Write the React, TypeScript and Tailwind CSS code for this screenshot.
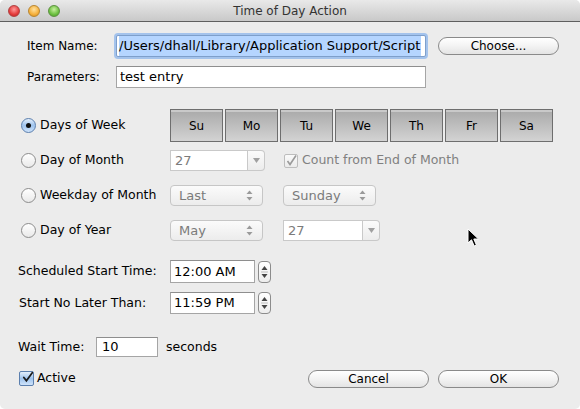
import React from "react";

const font = "font-['Lucida_Grande','DejaVu_Sans',sans-serif]";

const Radio: React.FC<{ on?: boolean }> = ({ on }) => (
  <span
    className={
      "flex h-[15px] w-[15px] items-center justify-center rounded-full border " +
      (on
        ? "border-[#5b7fae] bg-gradient-to-b from-[#e4effb] via-[#9fc4ee] to-[#cfe3fa]"
        : "border-[#8c8c8c] bg-gradient-to-b from-[#ffffff] to-[#e9e9e9]")
    }
  >
    {on && <span className="h-[5px] w-[5px] rounded-full bg-[#111]" />}
  </span>
);

const UpDown: React.FC<{ color?: string }> = ({ color = "#8c8c8c" }) => (
  <svg width="7" height="11" viewBox="0 0 7 11">
    <path d="M3.5 0.5 L6.5 4 L0.5 4 Z" fill={color} />
    <path d="M3.5 10.5 L6.5 7 L0.5 7 Z" fill={color} />
  </svg>
);

const Popup: React.FC<{ value: string; w: string }> = ({ value, w }) => (
  <div
    className={`${w} flex h-[21px] items-center justify-between rounded-[4px] border border-[#c6c6c6] bg-gradient-to-b from-[#fbfbfb] to-[#ececec] pl-[8px] pr-[9px] text-[13px] text-[#7b7b7b]`}
  >
    <span>{value}</span>
    <UpDown color="#9a9a9a" />
  </div>
);

const Combo: React.FC<{ value: string; w: string; h: string }> = ({ value, w, h }) => (
  <div className={`${w} ${h} flex`}>
    <div className="flex flex-1 items-center border border-[#c9c9c9] bg-white pl-[4px] text-[13px] text-[#7b7b7b]">
      {value}
    </div>
    <div className="flex w-[17px] items-center justify-center rounded-r-[4px] border border-l-0 border-[#c9c9c9] bg-gradient-to-b from-[#fbfbfb] to-[#ececec]">
      <svg width="7" height="5" viewBox="0 0 7 5">
        <path d="M0 0 L7 0 L3.5 5 Z" fill="#a0a0a0" />
      </svg>
    </div>
  </div>
);

const Pill: React.FC<{ label: string }> = ({ label }) => (
  <button className="flex h-[18px] w-[121px] items-center justify-center rounded-full border border-[#8a8a8a] bg-gradient-to-b from-[#ffffff] via-[#f3f3f3] to-[#e4e4e4] text-[12px] text-black">
    {label}
  </button>
);

const Stepper: React.FC = () => (
  <div className="ml-[3px] flex h-[22px] w-[13px] flex-col items-center justify-center rounded-[4px] border border-[#8c8c8c] bg-gradient-to-b from-[#ffffff] to-[#ededed]">
    <svg width="7" height="14" viewBox="0 0 7 14">
      <path d="M3.5 1 L6.5 5 L0.5 5 Z" fill="#444" />
      <path d="M0 7 L7 7" stroke="#bdbdbd" strokeWidth="1" />
      <path d="M3.5 13 L6.5 9 L0.5 9 Z" fill="#444" />
    </svg>
  </div>
);

const days = ["Su", "Mo", "Tu", "We", "Th", "Fr", "Sa"];

export default function App() {
  return (
    <div className={`${font} h-[409px] w-[580px] bg-white text-[12.5px] text-black`}>
      <div className="relative flex h-full flex-col overflow-hidden rounded-[5px] bg-[#ececec]">
        {/* title bar */}
        <div className="relative flex h-[22px] items-center justify-center border-b border-[#5f5f5f] bg-gradient-to-b from-[#e9e9e9] to-[#c9c9c9]">
          <div className="absolute left-[8px] top-[5px] flex gap-[8px]">
            <span className="h-[12px] w-[12px] rounded-full border border-[#b04040] bg-[radial-gradient(circle_at_50%_35%,#ff9a9a,#e43c3c_60%,#b82020)]" />
            <span className="h-[12px] w-[12px] rounded-full border border-[#b88530] bg-[radial-gradient(circle_at_50%_35%,#ffe2a0,#f5b03c_60%,#d08a1a)]" />
            <span className="h-[12px] w-[12px] rounded-full border border-[#5c9040] bg-[radial-gradient(circle_at_50%_35%,#c8f0a0,#6cc040_60%,#4a9a2a)]" />
          </div>
          <span className="text-[12px] text-[#333]">Time of Day Action</span>
        </div>

        {/* item name */}
        <div className="mt-[13px] flex h-[22px] items-center pl-[27px]">
          <span className="w-[89px] text-[12px]">Item Name:</span>
          <div className="flex h-[22px] w-[310px] items-center overflow-hidden whitespace-nowrap rounded-[2px] border border-[#7e9fcb] bg-white pl-[2px] text-[13px] shadow-[0_0_0_2px_#a4c3ec]">
            <span className="bg-[#b5d5ff] pr-[1px]">/Users/dhall/Library/Application Support/Script</span>
          </div>
          <div className="ml-[12px]">
            <Pill label="Choose..." />
          </div>
        </div>

        {/* parameters */}
        <div className="mt-[9px] flex h-[22px] items-center pl-[27px]">
          <span className="w-[89px] text-[12px]">Parameters:</span>
          <div className="flex h-[22px] w-[310px] items-center border border-[#a5a5a5] border-t-[#8e8e8e] bg-white pl-[3px] text-[13px]">
            test entry
          </div>
        </div>

        {/* schedule type */}
        <div className="mt-[20px] flex flex-col pl-[21px]">
          <div className="flex h-[35px] items-center">
            <Radio on />
            <span className="ml-[4px] w-[130px]">Days of Week</span>
            <div className="flex gap-[2px] text-[12px]">
              {days.map((d) => (
                <div
                  key={d}
                  className="flex h-[33px] w-[53px] items-center justify-center border border-[#6e6e6e] bg-gradient-to-b from-[#a9a9a9] to-[#d3d3d3] shadow-[inset_0_2px_0_#c9c9c9]"
                >
                  {d}
                </div>
              ))}
            </div>
          </div>
          <div className="flex h-[35px] items-center">
            <Radio />
            <span className="ml-[4px] w-[130px]">Day of Month</span>
            <Combo value="27" w="w-[95px]" h="h-[21px]" />
            <span className="ml-[19px] flex h-[14px] w-[14px] items-center justify-center rounded-[2px] border border-[#bdbdbd] bg-gradient-to-b from-[#fafafa] to-[#ebebeb]">
              <svg width="11" height="11" viewBox="0 0 11 11">
                <path d="M1.5 6 L4 9.5 L10 0.5" fill="none" stroke="#9a9a9a" strokeWidth="1.6" />
              </svg>
            </span>
            <span className="ml-[4px] text-[#808080]">Count from End of Month</span>
          </div>
          <div className="flex h-[35px] items-center">
            <Radio />
            <span className="ml-[4px] w-[130px]">Weekday of Month</span>
            <Popup value="Last" w="w-[93px]" />
            <div className="ml-[20px]">
              <Popup value="Sunday" w="w-[93px]" />
            </div>
          </div>
          <div className="flex h-[35px] items-center">
            <Radio />
            <span className="ml-[4px] w-[130px]">Day of Year</span>
            <Popup value="May" w="w-[93px]" />
            <div className="ml-[20px]">
              <Combo value="27" w="w-[97px]" h="h-[21px]" />
            </div>
          </div>
        </div>

        {/* times */}
        <div className="mt-[12px] flex h-[23px] items-center pl-[18px]">
          <span className="w-[152px]">Scheduled Start Time:</span>
          <div className="flex h-[23px] w-[85px] items-center border border-[#a5a5a5] border-t-[#8e8e8e] bg-white pl-[3px] text-[13px]">
            12:00 AM
          </div>
          <Stepper />
        </div>
        <div className="mt-[9px] flex h-[22px] items-center pl-[19px]">
          <span className="w-[151px]">Start No Later Than:</span>
          <div className="flex h-[22px] w-[85px] items-center border border-[#a5a5a5] border-t-[#8e8e8e] bg-white pl-[3px] text-[13px]">
            11:59 PM
          </div>
          <Stepper />
        </div>

        {/* wait time */}
        <div className="mt-[23px] flex h-[20px] items-center pl-[18px]">
          <span className="w-[78px]">Wait Time:</span>
          <div className="flex h-[20px] w-[62px] items-center border border-[#a5a5a5] border-t-[#8e8e8e] bg-white pl-[5px] text-[13px]">
            10
          </div>
          <span className="ml-[8px]">seconds</span>
        </div>

        {/* bottom */}
        <div className="mt-[12px] flex h-[19px] items-center pl-[19px] pr-[21px]">
          <span className="flex h-[15px] w-[15px] items-center justify-center rounded-[2px] border border-[#5b7fae] bg-gradient-to-b from-[#e4effb] via-[#9fc4ee] to-[#cfe3fa]">
            <svg width="15" height="15" viewBox="0 0 15 15" className="-mt-[3px] ml-[2px]">
              <path d="M2.5 7.5 L6 12 L14 1" fill="none" stroke="#1d1d1d" strokeWidth="2.4" strokeLinecap="round" />
            </svg>
          </span>
          <span className="ml-[3px]">Active</span>
          <div className="ml-auto flex gap-[9px]">
            <Pill label="Cancel" />
            <Pill label="OK" />
          </div>
        </div>

        {/* mouse pointer */}
        <svg className="absolute left-[467px] top-[228px]" width="14" height="20" viewBox="0 0 14 20">
          <path d="M1 1 L1 15 L4.5 11.8 L7.2 18 L9.4 17 L6.8 11 L11.5 11 Z" fill="#000" stroke="#fff" strokeWidth="1" />
        </svg>
      </div>
    </div>
  );
}
